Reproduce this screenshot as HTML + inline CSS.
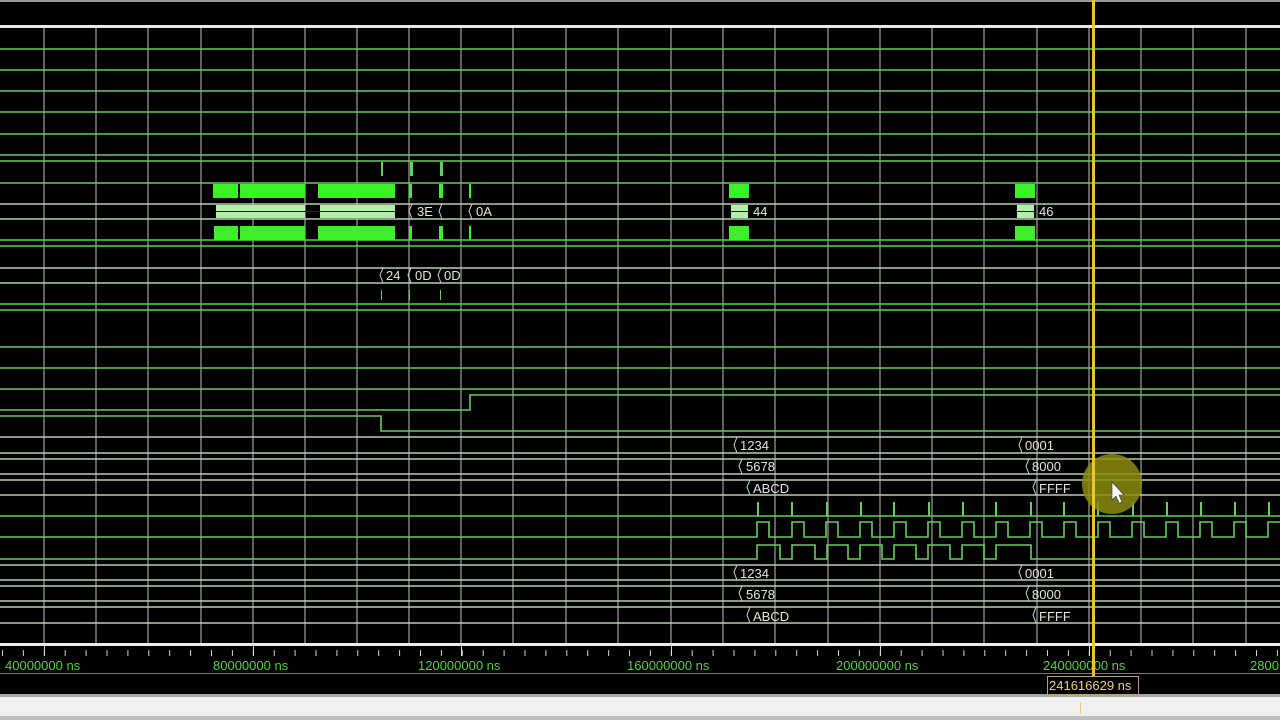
<!DOCTYPE html>
<html><head><meta charset="utf-8"><style>
html,body{margin:0;padding:0;background:#000;width:1280px;height:720px;overflow:hidden}
svg{display:block}
text{font-family:"Liberation Sans",sans-serif;font-size:13px}
</style></head><body>
<svg width="1280" height="720" viewBox="0 0 1280 720" xmlns="http://www.w3.org/2000/svg">
<defs>
<pattern id="tk" patternUnits="userSpaceOnUse" x="2" y="0" width="20.9" height="720">
<rect x="0" y="650" width="1" height="6" fill="#c8d8c0"/>
</pattern>
</defs>
<rect width="1280" height="720" fill="#000"/>
<rect x="0" y="0" width="1280" height="2" fill="#9a9a9a"/>
<rect x="0" y="25" width="1280" height="3" fill="#e8e8e8"/>
<g stroke="#959595" stroke-width="1.3">
<line x1="44" y1="28" x2="44" y2="644"/><line x1="96" y1="28" x2="96" y2="644"/><line x1="148" y1="28" x2="148" y2="644"/><line x1="201" y1="28" x2="201" y2="644"/><line x1="253" y1="28" x2="253" y2="644"/><line x1="305" y1="28" x2="305" y2="644"/><line x1="357" y1="28" x2="357" y2="644"/><line x1="409" y1="28" x2="409" y2="644"/><line x1="461" y1="28" x2="461" y2="644"/><line x1="513" y1="28" x2="513" y2="644"/><line x1="566" y1="28" x2="566" y2="644"/><line x1="618" y1="28" x2="618" y2="644"/><line x1="671" y1="28" x2="671" y2="644"/><line x1="723" y1="28" x2="723" y2="644"/><line x1="775" y1="28" x2="775" y2="644"/><line x1="828" y1="28" x2="828" y2="644"/><line x1="880" y1="28" x2="880" y2="644"/><line x1="932" y1="28" x2="932" y2="644"/><line x1="984" y1="28" x2="984" y2="644"/><line x1="1037" y1="28" x2="1037" y2="644"/><line x1="1089" y1="28" x2="1089" y2="644"/><line x1="1141" y1="28" x2="1141" y2="644"/><line x1="1193" y1="28" x2="1193" y2="644"/><line x1="1246" y1="28" x2="1246" y2="644"/>
</g>
<g stroke="#68cc60" stroke-width="1.6" fill="none">
<line x1="0" y1="49" x2="1280" y2="49"/><line x1="0" y1="70" x2="1280" y2="70"/><line x1="0" y1="91" x2="1280" y2="91"/><line x1="0" y1="112" x2="1280" y2="112"/><line x1="0" y1="134" x2="1280" y2="134"/>
<line x1="0" y1="155" x2="1280" y2="155"/><line x1="0" y1="161" x2="1280" y2="161"/>
<line x1="0" y1="183" x2="1280" y2="183"/>
<line x1="0" y1="240" x2="1280" y2="240"/><line x1="0" y1="246" x2="1280" y2="246"/>
<line x1="0" y1="304" x2="1280" y2="304"/><line x1="0" y1="310" x2="1280" y2="310"/>
<line x1="0" y1="347" x2="1280" y2="347"/><line x1="0" y1="368" x2="1280" y2="368"/><line x1="0" y1="389" x2="1280" y2="389"/>
<polyline points="0,410 470,410 470,395 1280,395"/>
<polyline points="0,416 381,416 381,431 1280,431"/>
<line x1="0" y1="516" x2="1280" y2="516"/>
<polyline points="0,537 757,537 757,522 769,522 769,537 792,537 792,522 804,522 804,537 826,537 826,522 838,522 838,537 860,537 860,522 872,522 872,537 894,537 894,522 906,522 906,537 928,537 928,522 940,522 940,537 962,537 962,522 974,522 974,537 996,537 996,522 1008,522 1008,537 1030,537 1030,522 1042,522 1042,537 1064,537 1064,522 1076,522 1076,537 1098,537 1098,522 1110,522 1110,537 1132,537 1132,522 1144,522 1144,537 1166,537 1166,522 1178,522 1178,537 1200,537 1200,522 1212,522 1212,537 1234,537 1234,522 1246,522 1246,537 1268,537 1268,522 1280,522"/>
<polyline points="0,559 757,559 757,545 780,545 780,559 792,559 792,545 815,545 815,559 827,559 827,545 848,545 848,559 860,559 860,545 882,545 882,559 894,559 894,545 916,545 916,559 928,559 928,545 950,545 950,559 962,559 962,545 984,545 984,559 996,559 996,545 1031,545 1031,559 1280,559"/>
</g>
<g fill="#68cc60">
<rect x="757" y="502" width="2" height="14"/><rect x="791" y="502" width="2" height="14"/><rect x="826" y="502" width="2" height="14"/><rect x="860" y="502" width="2" height="14"/><rect x="893" y="502" width="2" height="14"/><rect x="928" y="502" width="2" height="14"/><rect x="962" y="502" width="2" height="14"/><rect x="995" y="502" width="2" height="14"/><rect x="1030" y="502" width="2" height="14"/><rect x="1063" y="502" width="2" height="14"/><rect x="1097" y="502" width="2" height="14"/><rect x="1132" y="502" width="2" height="14"/><rect x="1166" y="502" width="2" height="14"/><rect x="1200" y="502" width="2" height="14"/><rect x="1234" y="502" width="2" height="14"/><rect x="1268" y="502" width="2" height="14"/>
<rect x="381" y="162" width="2" height="14"/><rect x="410" y="162" width="3" height="14"/><rect x="440" y="162" width="3" height="14"/>
<rect x="381" y="290" width="1" height="10"/><rect x="409" y="290" width="1" height="10"/><rect x="440" y="290" width="1" height="10"/>
</g>
<g stroke="#bccab4" stroke-width="1.6">
<line x1="0" y1="204" x2="1280" y2="204"/><line x1="0" y1="219" x2="1280" y2="219"/>
<line x1="0" y1="268" x2="1280" y2="268"/><line x1="0" y1="283" x2="1280" y2="283"/>
<line x1="0" y1="437" x2="1280" y2="437"/><line x1="0" y1="453" x2="1280" y2="453"/>
<line x1="0" y1="459" x2="1280" y2="459"/><line x1="0" y1="474" x2="1280" y2="474"/>
<line x1="0" y1="480" x2="1280" y2="480"/><line x1="0" y1="495" x2="1280" y2="495"/>
<line x1="0" y1="565" x2="1280" y2="565"/><line x1="0" y1="580" x2="1280" y2="580"/>
<line x1="0" y1="586" x2="1280" y2="586"/><line x1="0" y1="601" x2="1280" y2="601"/>
<line x1="0" y1="607" x2="1280" y2="607"/><line x1="0" y1="623" x2="1280" y2="623"/>
</g>
<g fill="#3cf02a">
<rect x="213" y="184" width="25" height="14"/><rect x="240" y="184" width="65" height="14"/><rect x="318" y="184" width="77" height="14"/>
<rect x="214" y="226" width="24" height="14"/><rect x="240" y="226" width="65" height="14"/><rect x="318" y="226" width="77" height="14"/>
<rect x="409" y="184" width="3" height="14"/><rect x="439" y="184" width="4" height="14"/><rect x="469" y="184" width="2" height="14"/>
<rect x="409" y="226" width="3" height="14"/><rect x="439" y="226" width="4" height="14"/><rect x="469" y="226" width="2" height="14"/>
<rect x="729" y="184" width="20" height="14"/><rect x="729" y="226" width="20" height="14"/>
<rect x="1015" y="184" width="20" height="14"/><rect x="1015" y="226" width="20" height="14"/>
</g>
<g fill="#b2f0a8">
<rect x="216" y="205" width="89" height="13"/><rect x="320" y="205" width="75" height="13"/>
<rect x="731" y="205" width="17" height="13"/><rect x="1017" y="205" width="17" height="13"/>
</g>
<g stroke="#222" stroke-width="1"><line x1="216" y1="211.5" x2="395" y2="211.5"/><line x1="731" y1="211.5" x2="748" y2="211.5"/><line x1="1017" y1="211.5" x2="1034" y2="211.5"/></g>
<g stroke="#c8d8c0" stroke-width="1" fill="none">
<path d="M383,268 l-3,7 l3,8 M411,268 l-3,7 l3,8 M441,268 l-3,7 l3,8"/>
<path d="M412,204 l-3,7 l3,8 M442,204 l-3,7 l3,8 M472,204 l-3,7 l3,8"/>
<path d="M737,437 l-3,8 l3,8 M1022,437 l-3,8 l3,8 M742,459 l-3,7 l3,8 M1029,459 l-3,7 l3,8 M750,480 l-3,7 l3,8 M1036,480 l-3,7 l3,8"/>
<path d="M737,565 l-3,7 l3,8 M1022,565 l-3,7 l3,8 M742,586 l-3,7 l3,8 M1029,586 l-3,7 l3,8 M750,607 l-3,8 l3,8 M1036,607 l-3,8 l3,8"/>
</g>
<g fill="#e4e4e4">
<text x="417" y="216">3E</text><text x="476" y="216">0A</text>
<text x="753" y="216">44</text><text x="1039" y="216">46</text>
<text x="386" y="280">24</text><text x="415" y="280">0D</text><text x="444" y="280">0D</text>
<text x="740" y="450">1234</text><text x="1025" y="450">0001</text>
<text x="746" y="471">5678</text><text x="1032" y="471">8000</text>
<text x="753" y="493">ABCD</text><text x="1039" y="493">FFFF</text>
<text x="740" y="578">1234</text><text x="1025" y="578">0001</text>
<text x="746" y="599">5678</text><text x="1032" y="599">8000</text>
<text x="753" y="621">ABCD</text><text x="1039" y="621">FFFF</text>
</g>
<rect x="0" y="643" width="1280" height="3" fill="#ececec"/>
<rect x="0" y="0" width="1280" height="720" fill="url(#tk)"/>
<g fill="#d0e0c8"><rect x="44" y="646" width="1" height="10"/><rect x="253" y="646" width="1" height="10"/><rect x="461" y="646" width="1" height="10"/><rect x="671" y="646" width="1" height="10"/><rect x="880" y="646" width="1" height="10"/><rect x="1089" y="646" width="1" height="10"/></g>
<g fill="#58d048">
<text x="5" y="670">40000000 ns</text><text x="213" y="670">80000000 ns</text><text x="418" y="670">120000000 ns</text><text x="627" y="670">160000000 ns</text><text x="836" y="670">200000000 ns</text><text x="1043" y="670">240000000 ns</text><text x="1250" y="670">2800</text>
</g>
<rect x="0" y="673" width="1280" height="1" fill="#7a7a7a"/>
<rect x="0" y="694" width="1280" height="3" fill="#a8a8a8"/>
<rect x="0" y="697" width="1280" height="23" fill="#f0f0f0"/>
<rect x="0" y="716" width="1280" height="4" fill="#bdbdbd"/>
<rect x="1080" y="702" width="1" height="12" fill="#e8d070"/>
<circle cx="1112" cy="484" r="30" fill="#8c8c10" opacity="0.85"/>
<rect x="1092" y="0" width="3" height="690" fill="#f0c428"/>
<rect x="1047.5" y="676.5" width="91" height="18" fill="#000" stroke="#b8a070"/>
<text x="1049" y="690" fill="#f0d080">241616629 ns</text>
<path d="M1112,482 L1112,500 L1116,496 L1119,503 L1122,502 L1119,495 L1124,495 Z" fill="#fff" stroke="#333" stroke-width="0.6"/>
</svg>
</body></html>
